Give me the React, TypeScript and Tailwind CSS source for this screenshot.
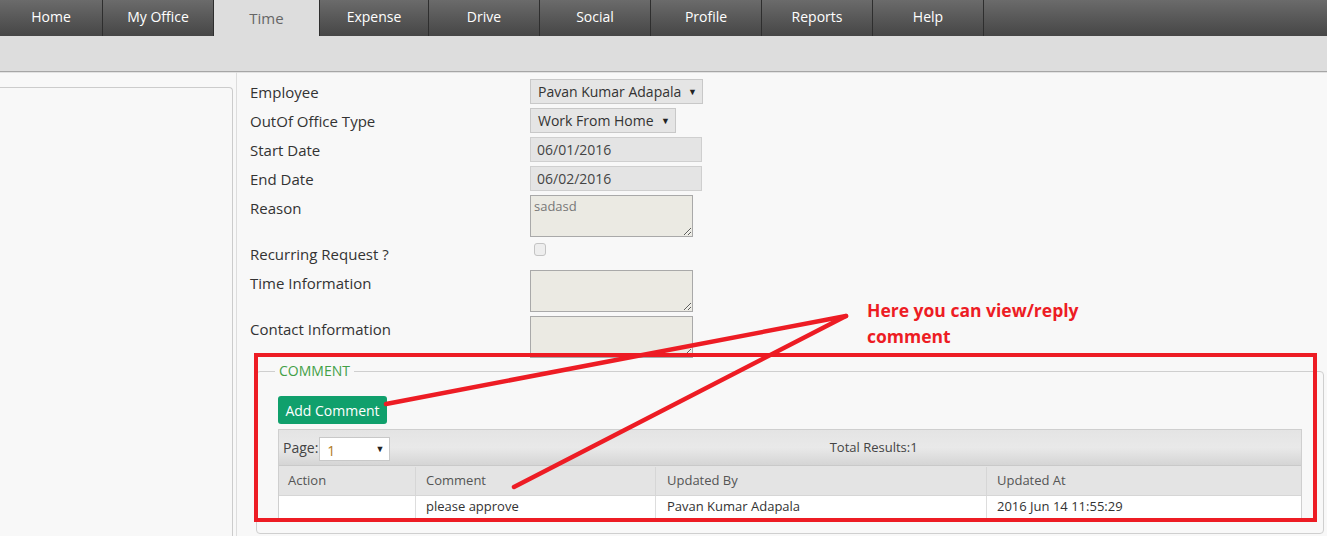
import React from 'react';

const tabs = [
  { label: 'Home', cls: 'w-[102px]', active: false },
  { label: 'My Office', cls: 'w-[110px]', active: false },
  { label: 'Time', cls: 'w-[105px]', active: true },
  { label: 'Expense', cls: 'w-[108px]', active: false },
  { label: 'Drive', cls: 'w-[110px]', active: false },
  { label: 'Social', cls: 'w-[110px]', active: false },
  { label: 'Profile', cls: 'w-[110px]', active: false },
  { label: 'Reports', cls: 'w-[110px]', active: false },
  { label: 'Help', cls: 'w-[110px]', active: false },
];

function Label({ children }: { children: React.ReactNode }) {
  return <div className="w-[280px] shrink-0 pt-[3px] text-[15px] leading-[20px] text-[#333]">{children}</div>;
}

function SelectBox({ value, cls }: { value: string; cls: string }) {
  return (
    <div className={`${cls} flex h-[25px] items-center justify-between border border-[#c8c8c8] bg-[#e5e5e5] pl-[7px] pr-[5px] text-[14px] text-[#333]`}>
      <span>{value}</span>
      <span className="text-[9px] text-[#222]">▼</span>
    </div>
  );
}

function DateBox({ value }: { value: string }) {
  return (
    <div className="flex h-[25px] w-[172px] items-center border border-[#cfcfcf] bg-[#e4e4e4] pl-[6px] text-[14px] text-[#444]">
      {value}
    </div>
  );
}

function Area({ value }: { value?: string }) {
  return (
    <textarea
      readOnly
      defaultValue={value ?? ''}
      className="block h-[42px] w-[163px] border border-[#a9a9a9] bg-[#ebeae3] px-[3px] py-[1px] text-[13px] leading-[18px] text-[#777] outline-none"
    />
  );
}

export default function App() {
  return (
    <div className="relative h-[536px] w-[1327px] overflow-hidden bg-[#f8f8f8] font-['Open_Sans','Liberation_Sans',sans-serif] text-[#333]">
      {/* top nav */}
      <div className="flex h-[36px] bg-linear-to-b from-[#6b6b6b] to-[#464646]">
        {tabs.map((t) => (
          <React.Fragment key={t.label}>
            <div
              className={
                t.active
                  ? `${t.cls} flex items-center justify-center bg-[#dddddd] text-[15px] text-[#666]`
                  : `${t.cls} flex items-center justify-center pb-[4px] text-[14px] text-white`
              }
            >
              {t.label}
            </div>
            <div className="w-px bg-[#2e2e2e]" />
          </React.Fragment>
        ))}
      </div>
      {/* sub band */}
      <div className="h-[36px] border-b border-[#a6a6a6] bg-[#dddddd] shadow-[0_1px_0_#e2e2e2]" />

      {/* body */}
      <div className="flex h-[464px]">
        <div className="w-[236px] shrink-0 pt-[15px]">
          <div className="h-full w-[233px] rounded-tr-[4px] border-t border-r border-[#cccccc]" />
        </div>
        <div className="flex-1 border-l border-[#dddddd]">
          <div className="flex flex-col gap-[4px] pl-[13px] pt-[7px]">
            <div className="flex">
              <Label>Employee</Label>
              <SelectBox value="Pavan Kumar Adapala" cls="w-[173px]" />
            </div>
            <div className="flex">
              <Label>OutOf Office Type</Label>
              <SelectBox value="Work From Home" cls="w-[146px]" />
            </div>
            <div className="flex">
              <Label>Start Date</Label>
              <DateBox value="06/01/2016" />
            </div>
            <div className="flex">
              <Label>End Date</Label>
              <DateBox value="06/02/2016" />
            </div>
            <div className="flex">
              <Label>Reason</Label>
              <Area value="sadasd" />
            </div>
            <div className="flex h-[25px]">
              <Label>Recurring Request ?</Label>
              <div className="ml-[4px] mt-[2px] h-[13px] w-[12px] rounded-[3px] border border-[#c4c4c4] bg-[#eeeeee]" />
            </div>
            <div className="flex">
              <Label>Time Information</Label>
              <Area />
            </div>
            <div className="flex">
              <Label>Contact Information</Label>
              <Area />
            </div>
          </div>

          {/* comment fieldset */}
          <div className="relative ml-[19px] mr-[3px] mt-[13px] rounded-[4px] border border-[#cfcfcf] px-[21px] pb-[14px] pt-[24px]">
            <div className="absolute left-[18px] top-[-11px] bg-[#f8f8f8] px-[4px] text-[14px] leading-[20px] text-[#43a047]">
              COMMENT
            </div>
            <div className="flex h-[28px] w-[109px] items-center justify-center rounded-[3px] bg-[#10a06c] text-[14px] text-white">
              Add Comment
            </div>
            <div className="mt-[5px] w-[1024px] border border-[#cfcfcf] bg-white">
              <div className="flex h-[36px] items-center border-b border-[#c9c9c9] bg-linear-to-b from-[#e4e4e4] via-[#e9e9e9] to-[#d5d5d5]">
                <span className="pl-[4px] text-[14px] text-[#444]">Page:</span>
                <div className="ml-[1px] mt-[2px] flex h-[24px] w-[71px] items-center justify-between border border-[#c8c8c8] bg-white pl-[7px] pr-[5px]">
                  <span className="mt-[3px] text-[14px] text-[#b07a1c]">1</span>
                  <span className="text-[9px] text-[#222]">▼</span>
                </div>
                <div className="flex-1 pl-[56px] text-center text-[13px] text-[#444]">Total Results:1</div>
              </div>
              <div className="grid h-[30px] grid-cols-[137px_240px_331px_1fr] border-b border-[#d6d6d6] bg-[#e4e4e4] pt-[1px] text-[13px] text-[#555]">
                <div className="flex items-center border-r border-[#d6d6d6] pl-[9px]">Action</div>
                <div className="flex items-center border-r border-[#d6d6d6] pl-[10px]">Comment</div>
                <div className="flex items-center border-r border-[#d6d6d6] pl-[11px]">Updated By</div>
                <div className="flex items-center pl-[10px]">Updated At</div>
              </div>
              <div className="grid h-[22px] grid-cols-[137px_240px_331px_1fr] bg-white text-[13px] text-[#333]">
                <div className="border-r border-[#dddddd]" />
                <div className="flex items-center border-r border-[#dddddd] pl-[10px]">please approve</div>
                <div className="flex items-center border-r border-[#dddddd] pl-[11px]">Pavan Kumar Adapala</div>
                <div className="flex items-center pl-[10px]">2016 Jun 14 11:55:29</div>
              </div>
            </div>
          </div>
        </div>
      </div>

      {/* red annotation overlay */}
      <svg className="pointer-events-none absolute left-0 top-0" width="1327" height="536" viewBox="0 0 1327 536">
        <rect x="256" y="355" width="1059" height="165" fill="none" stroke="#ed1c24" strokeWidth="4" />
        <line x1="386" y1="404" x2="846" y2="316" stroke="#ed1c24" strokeWidth="4.5" strokeLinecap="round" />
        <line x1="846" y1="316" x2="514" y2="487" stroke="#ed1c24" strokeWidth="4.5" strokeLinecap="round" />
      </svg>
      <div className="absolute left-[867px] top-[297px] font-['Open_Sans','Liberation_Sans',sans-serif] text-[17.5px] font-bold leading-[26px] text-[#ed1c24]">
        Here you can view/reply
        <br />
        comment
      </div>
    </div>
  );
}
